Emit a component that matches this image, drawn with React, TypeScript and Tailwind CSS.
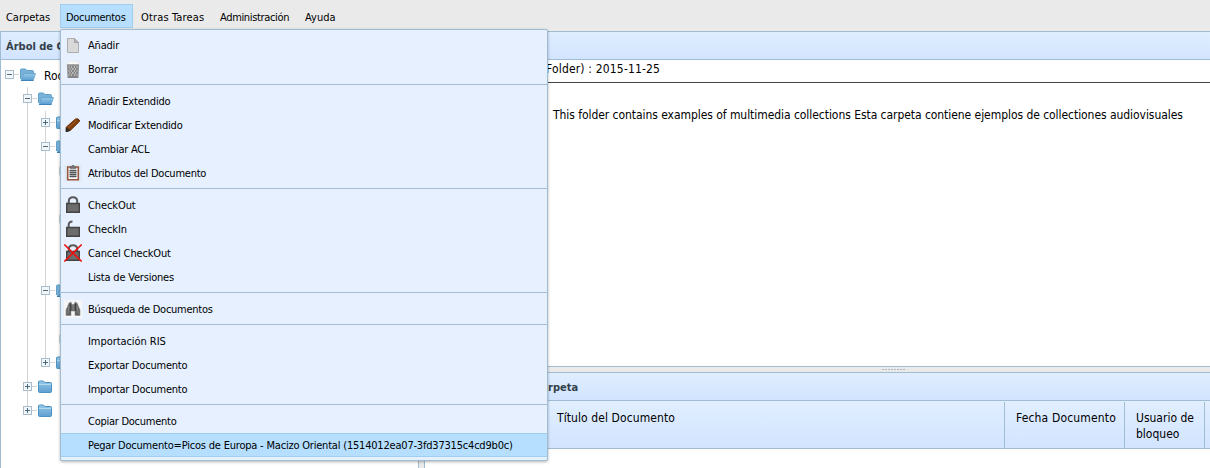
import type { ReactNode } from 'react';

const BORDER = 'border-[#a1bdd4]';

function DocIcon() {
  return (
    <svg width="18" height="18" viewBox="0 0 18 18">
      <path d="M3.500 2.500h7l4 4v10h-11z" fill="#d9d9d9" stroke="#adadad" />
      <path d="M10.500 2.500v4h4z" fill="#b8b8b8" stroke="#a3a3a3" />
    </svg>
  );
}

function TrashIcon() {
  return (
    <svg width="18" height="18" viewBox="0 0 18 18">
      <path d="M2 5l1-3 2 1 1-3 3 2 3-2 1 3 2-1 1 3z" fill="#fafafa" stroke="#dfe3e8" strokeWidth=".6" />
      <path d="M3 4.500h12l-.6 13.500H3.600z" fill="#868686" />
      <path
        d="M4.500 7h1m1.500 0h1m2 0h1m1.500 0h1M5.500 9h1m1.500 0h1.500m1.500 0h1M4.500 11h1m1.500 0h1m2 0h1m1.500 0h1M5.500 13h1m1.500 0h1.500m1.500 0h1M4.500 15h1m1.500 0h1m2 0h1m1.500 0h1"
        stroke="#f0f0f0"
        strokeWidth="1.200"
      />
      <path d="M3 5h12" stroke="#999" />
    </svg>
  );
}

function PencilIcon() {
  return (
    <svg width="18" height="18" viewBox="0 0 18 18">
      <path d="M2.200 11.200L11.500 3Q14.500 1.800 15.800 5L6.200 14.500L2.200 15.500z" fill="#803d0a" stroke="#64300b" strokeWidth="1" />
      <path d="M4.500 11.500L12.500 4.500" stroke="#9a551c" strokeWidth="1.300" />
      <path d="M2 11.500l4.200 2.600-1.700 1.500-2.800.3z" fill="#2d2927" />
    </svg>
  );
}

function ClipboardIcon() {
  return (
    <svg width="18" height="18" viewBox="0 0 18 18">
      <path d="M.5 .5h17v17H.5z" fill="#deebf4" />
      <path d="M3.700 3h10.600v12.700H3.700z" fill="#fff" stroke="#99573f" strokeWidth="1.600" />
      <path d="M6 4.500V3h1.500l.5-1.500h2l.5 1.500H12v1.500z" fill="#777" stroke="#555" strokeWidth=".5" />
      <path d="M5.500 6.500h7M5.500 8.500h7M5.500 10.500h7M5.500 12.500h7" stroke="#4e5357" strokeWidth="1.300" />
    </svg>
  );
}

function LockIcon({ open = false, crossed = false }: { open?: boolean; crossed?: boolean }) {
  return (
    <svg width="18" height="18" viewBox="0 0 18 18">
      <path
        d={open ? 'M4.700 8V4.500Q5 1.500 8.500 1.500' : 'M4.800 8V5Q5 1.300 9 1.300T13.200 5V8'}
        fill="none"
        stroke="#595959"
        strokeWidth="2"
      />
      <path d="M2.700 7.500h12.600v8.700H2.700z" fill="#6c6c6c" stroke="#444" strokeWidth="1.400" />
      {crossed && <path d="M.3 .5L17.700 17.500M17.700 .5L.3 17.500" stroke="#ee1010" strokeWidth="1.600" />}
    </svg>
  );
}

function BinocularsIcon() {
  return (
    <svg width="18" height="18" viewBox="0 0 18 18">
      <path d="M0 0h18v18H0z" fill="#f5f6f7" />
      <path
        d="M5 3l2-1 1 2.500h2L11 2l2 1 3 7v5.500h-5V11H7v4.500H2V10z"
        fill="#606060"
        stroke="#8b8b8b"
        strokeWidth=".6"
      />
      <path d="M5 6L3.700 13.500M13 6l1.300 7.500M9 5v5" stroke="#8c8c8c" />
      <path d="M6.500 4v7M11.500 4v7" stroke="#404040" />
    </svg>
  );
}

function FolderIcon({ open = false }: { open?: boolean }) {
  return (
    <svg width="16" height="16" viewBox="0 0 16 16" className="shrink-0">
      <defs>
        <linearGradient id="folder" x1="0" y1="0" x2="0" y2="1">
          <stop offset="0" stopColor="#97c9e9" />
          <stop offset="1" stopColor="#5b9fd0" />
        </linearGradient>
      </defs>
      {open ? (
        <>
          <path d="M.5 12V3q0-1 1-1h4l1.500 1.500h5.500q1 0 1 1V7" fill="#78b2d8" stroke="#5f9fca" />
          <path d="M1.200 13.300L3.700 6.500h11.800L13.200 13.300z" fill="url(#folder)" stroke="#62a2ce" strokeWidth=".8" />
          <path d="M1 13.500h12.500" stroke="#3f82b4" />
        </>
      ) : (
        <>
          <path d="M.5 12.500V3q0-1 1-1h4l1.500 1.500h5.500q1 0 1 1v8q0 1-1 1h-11q-1 0-1-1z" fill="url(#folder)" stroke="#4f91c0" />
          <path d="M1 5.500h12" stroke="#b4d9ef" />
        </>
      )}
    </svg>
  );
}

function LeafIcon() {
  return (
    <svg width="16" height="16" viewBox="0 0 16 16" className="shrink-0">
      <rect x="2.500" y="3.500" width="10" height="9" rx="1" fill="#e4ecf2" stroke="#c5ced6" />
    </svg>
  );
}

function Expander({ open }: { open: boolean }) {
  return (
    <svg width="17" height="24" viewBox="0 0 17 24" className="shrink-0">
      <path d="M11 11.500h5" stroke="#d3d3d3" />
      <rect x="2.500" y="7.500" width="8" height="8" fill="#f3f6f9" stroke="#a9bccb" />
      <path d={open ? 'M4 11.500h5' : 'M4 11.500h5M6.500 9v5'} stroke="#496b80" />
    </svg>
  );
}

function Guide({ visible }: { visible: boolean }) {
  return (
    <div className="flex h-6 w-[18px] shrink-0 pl-[6px]">
      {visible && <div className="h-6 w-px bg-[#d3d3d3]" />}
    </div>
  );
}

type Node = { guides: boolean[]; kind: 'open' | 'closed' | 'leaf' | 'blank'; label?: string };

const root: Node = { guides: [], kind: 'open', label: 'Roo' };
const leaf: Node = { guides: [false, true, true], kind: 'leaf' };
const blank: Node = { guides: [false, true, true], kind: 'blank' };
const nodes: Node[] = [
  root,
  { guides: [false], kind: 'open' },
  { guides: [false, true], kind: 'closed' },
  { guides: [false, true], kind: 'open' },
  leaf,
  blank,
  leaf,
  blank,
  blank,
  { guides: [false, true], kind: 'open' },
  blank,
  leaf,
  { guides: [false, true], kind: 'closed' },
  { guides: [false], kind: 'closed' },
  { guides: [false], kind: 'closed' },
];

function TreeRow({ node, connectUp, connectDown }: { node: Node; connectUp: boolean; connectDown: boolean }) {
  const isFolder = node.kind === 'open' || node.kind === 'closed';
  return (
    <div className="flex h-6 items-center pl-[2px]">
      {node.guides.map((g, i) => (
        <Guide key={i} visible={g} />
      ))}
      {node.kind === 'leaf' && <LeafIcon />}
      {isFolder && (
        <>
          <div className="relative h-6 w-[17px] shrink-0">
            {connectUp && <div className="absolute left-[6px] top-0 h-2 w-px bg-[#d3d3d3]" />}
            {connectDown && <div className="absolute bottom-0 left-[6px] h-2 w-px bg-[#d3d3d3]" />}
            <div className="relative">
              <Expander open={node.kind === 'open'} />
            </div>
          </div>
          <FolderIcon open={node.kind === 'open'} />
          {node.label && <span className="ml-2 pt-px">{node.label}</span>}
        </>
      )}
    </div>
  );
}

type Entry = { label: string; icon?: ReactNode; track?: string; active?: boolean };

const groups: Entry[][] = [
  [
    { label: 'Añadir', icon: <DocIcon /> },
    { label: 'Borrar', icon: <TrashIcon /> },
  ],
  [
    { label: 'Añadir Extendido', track: 'tracking-[-0.16px]' },
    { label: 'Modificar Extendido', icon: <PencilIcon /> },
    { label: 'Cambiar ACL', track: 'tracking-[-0.25px]' },
    { label: 'Atributos del Documento', icon: <ClipboardIcon />, track: 'tracking-[-0.24px]' },
  ],
  [
    { label: 'CheckOut', icon: <LockIcon />, track: 'tracking-[-0.1px]' },
    { label: 'CheckIn', icon: <LockIcon open />, track: 'tracking-[-0.1px]' },
    { label: 'Cancel CheckOut', icon: <LockIcon crossed />, track: 'tracking-[-0.15px]' },
    { label: 'Lista de Versiones' },
  ],
  [{ label: 'Búsqueda de Documentos', icon: <BinocularsIcon />, track: 'tracking-[-0.26px]' }],
  [
    { label: 'Importación RIS', track: 'tracking-[-0.06px]' },
    { label: 'Exportar Documento' },
    { label: 'Importar Documento', track: 'tracking-[-0.23px]' },
  ],
  [
    { label: 'Copiar Documento', track: 'tracking-[-0.26px]' },
    {
      label: 'Pegar Documento=Picos de Europa - Macizo Oriental (1514012ea07-3fd37315c4cd9b0c)',
      track: 'tracking-[-0.2px]',
      active: true,
    },
  ],
];

function DropMenu() {
  return (
    <div className="absolute left-[60px] top-[29px] z-10 w-[488px] rounded-[2px] border border-[#a1bdd4] bg-[#e6f0ff] py-[3px] text-[11px] shadow-[0_1px_3px_rgba(0,0,0,0.3)]">
      {groups.map((group, i) => (
        <div key={i}>
          {i > 0 && <div className="mb-1 mt-[3px] h-px bg-[#a1bdd4]" />}
          {group.map((e) => (
            <div
              key={e.label}
              className={`flex h-6 items-center border-y pl-[3px] ${e.active ? 'border-[#a0cfee] bg-[#b5deff]' : 'border-transparent'}`}
            >
              <div className="w-6 shrink-0">{e.icon}</div>
              <span className={`whitespace-nowrap pt-[2px] ${e.track ?? 'tracking-[-0.2px]'}`}>{e.label}</span>
            </div>
          ))}
        </div>
      ))}
    </div>
  );
}

export default function App() {
  return (
    <div className="relative flex h-[468px] w-[1210px] flex-col overflow-hidden bg-[#eaeaea] font-['DejaVu_Sans_Condensed','DejaVu_Sans',sans-serif] text-[12px] text-black [font-stretch:condensed]">
      <nav className="flex h-[31px] shrink-0 pt-1 text-[11px] leading-[28px]">
        <span className="w-[60px] pl-[6px] tracking-[-0.05px]">Carpetas</span>
        <span className="h-6 w-[73px] border border-[#a0cfee] bg-[#b5deff] pl-[5px] leading-[26px] tracking-[-0.3px]">Documentos</span>
        <span className="w-[79px] pl-2 tracking-[0.15px]">Otras Tareas</span>
        <span className="w-[85px] pl-2 tracking-[-0.35px]">Administración</span>
        <span className="pl-2">Ayuda</span>
      </nav>
      <div className="flex min-h-0 flex-1">
        <aside className={`w-[419px] shrink-0 border border-b-0 bg-white ${BORDER}`}>
          <h2 className={`h-7 border-b bg-linear-to-b from-[#dfedff] to-[#d2e4ff] pl-[5px] text-[11px] font-bold leading-[29px] text-[#333f49] ${BORDER}`}>
            Árbol de C
          </h2>
          <div className="pt-[3px]">
            {nodes.map((n, i) => (
              <TreeRow
                key={i}
                node={n}
                connectUp={i > 0}
                connectDown={i > 0 && i !== 12 && i !== nodes.length - 1}
              />
            ))}
          </div>
        </aside>
        <div className="w-[5px] shrink-0" />
        <main className="flex min-w-0 flex-1 flex-col">
          <section className={`h-[336px] shrink-0 border-y border-l bg-white ${BORDER}`}>
            <div className={`h-7 border-b bg-linear-to-b from-[#e0eeff] to-[#d2e4ff] ${BORDER}`} />
            <div className="flex h-[23px] border-b border-[#444] pl-[121px] leading-[18px]">
              <span className="whitespace-nowrap tracking-[0.17px]">Folder) : 2015-11-25</span>
            </div>
            <p className="whitespace-nowrap pl-[128px] pt-[23px] leading-[18px] tracking-[-0.055px]">
              This folder contains examples of multimedia collections Esta carpeta contiene ejemplos de collectiones audiovisuales
            </p>
          </section>
          <div className="flex h-[5px] shrink-0 items-center justify-center gap-px pl-[152px]">
            {Array.from({ length: 8 }, (_, i) => (
              <span key={i} className="h-px w-[2px] bg-[#b0b8c0]" />
            ))}
          </div>
          <section className={`flex-1 border-l border-t bg-white ${BORDER}`}>
            <h2 className={`h-7 border-b bg-linear-to-b from-[#e0eeff] to-[#d2e4ff] pl-[123px] text-[11px] font-bold leading-[29px] text-[#333f49] ${BORDER}`}>
              rpeta
            </h2>
            <div className={`flex h-12 border-b bg-linear-to-b from-[#e0eeff] to-[#d2e4ff] pt-px leading-4 ${BORDER}`}>
              <div className={`w-[580px] border-r pl-[132px] pt-2 tracking-[0.09px] ${BORDER}`}>Título del Documento</div>
              <div className={`w-[120px] whitespace-nowrap border-r pl-[11px] pt-2 tracking-[0.16px] ${BORDER}`}>Fecha Documento</div>
              <div className={`w-20 border-r pl-[11px] pt-2 ${BORDER}`}>
                Usuario de
                <br />
                bloqueo
              </div>
            </div>
          </section>
        </main>
      </div>
      <DropMenu />
    </div>
  );
}
